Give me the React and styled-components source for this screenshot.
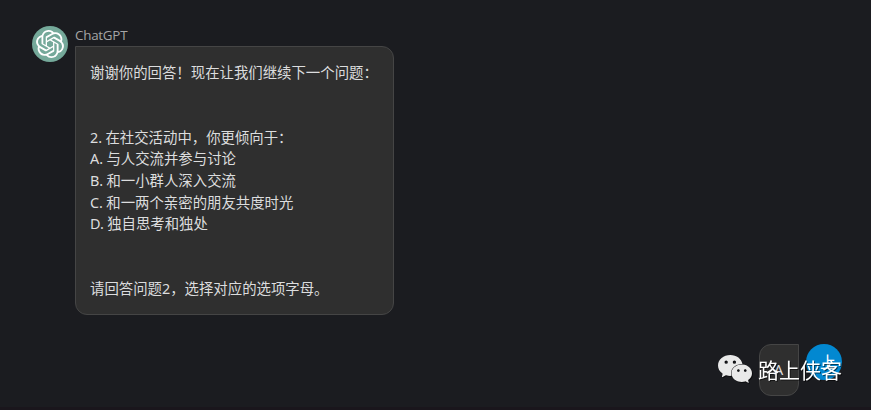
import React from "react";
import styled, { createGlobalStyle } from "styled-components";
import { SiOpenai, SiWechat } from "react-icons/si";

const GlobalStyle = createGlobalStyle`
  body { margin: 0; background: #1b1c20; }
  * { box-sizing: border-box; }
`;

const Chat = styled.main`
  position: relative;
  display: flex;
  flex-direction: column;
  gap: 29px;
  width: 871px;
  height: 410px;
  padding: 26px 29px 0 32px;
  overflow: hidden;
  background: #1b1c20;
  border-bottom: 3px solid #1a161c;
  font-family: "Noto Sans", "Noto Sans CJK SC", sans-serif;
  color: #dcddde;
`;

const Message = styled.article`
  display: flex;
  flex-direction: ${(p) => (p.$own ? "row-reverse" : "row")};
  align-items: flex-start;
  gap: 7px;
`;

const Avatar = styled.div`
  display: flex;
  align-items: center;
  justify-content: center;
  flex: none;
  width: 36px;
  height: 36px;
  padding-left: ${(p) => p.$inset || "0"};
  border-radius: 50%;
  background: ${(p) => p.$color};
  color: #fff;
  font-size: 16px;
  line-height: 1;
`;

const Name = styled.div`
  height: 20px;
  font-family: "Open Sans", sans-serif;
  font-size: 13.4px;
  line-height: 18px;
  letter-spacing: -0.25px;
  color: #a5a5a5;
`;

const Bubble = styled.div`
  width: ${(p) => p.$width};
  height: ${(p) => p.$height};
  padding: ${(p) => (p.$own ? "14px" : "15px 14px")};
  border: 1px solid #454545;
  border-radius: ${(p) => (p.$own ? "12px 0 12px 12px" : "0 12px 12px 12px")};
  background: #2f2f2f;
  font-size: 14.4px;
  line-height: 21.6px;
  word-spacing: -0.4px;
  white-space: pre;
`;

const Watermark = styled.div`
  position: absolute;
  left: 718px;
  top: 354px;
  display: flex;
  align-items: center;
  gap: 6px;
  height: 30px;
  color: #e9e9e9;
  filter: drop-shadow(1px 1px 0.5px rgba(0, 0, 0, 0.55));
`;

const WatermarkText = styled.span`
  font-family: "Noto Sans CJK SC", sans-serif;
  font-size: 21px;
  line-height: 30px;
  color: #fff;
`;

const reply = [
  "谢谢你的回答！现在让我们继续下一个问题：",
  "",
  "",
  "2. 在社交活动中，你更倾向于：",
  "A. 与人交流并参与讨论",
  "B. 和一小群人深入交流",
  "C. 和一两个亲密的朋友共度时光",
  "D. 独自思考和独处",
  "",
  "",
  "请回答问题2，选择对应的选项字母。",
].join("\n");

export default function App() {
  return (
    <>
      <GlobalStyle />
      <Chat lang="zh-CN">
        <Message>
          <Avatar $color="#75a99a">
            <SiOpenai size={28} />
          </Avatar>
          <div>
            <Name>ChatGPT</Name>
            <Bubble $width="319px" $height="269px">{reply}</Bubble>
          </div>
        </Message>
        <Message $own>
          <Avatar $color="#0288d1" $inset="8px">上</Avatar>
          <Bubble $own $width="40px" $height="52px">A</Bubble>
        </Message>
        <Watermark>
          <SiWechat size={34} />
          <WatermarkText>路上侠客</WatermarkText>
        </Watermark>
      </Chat>
    </>
  );
}
